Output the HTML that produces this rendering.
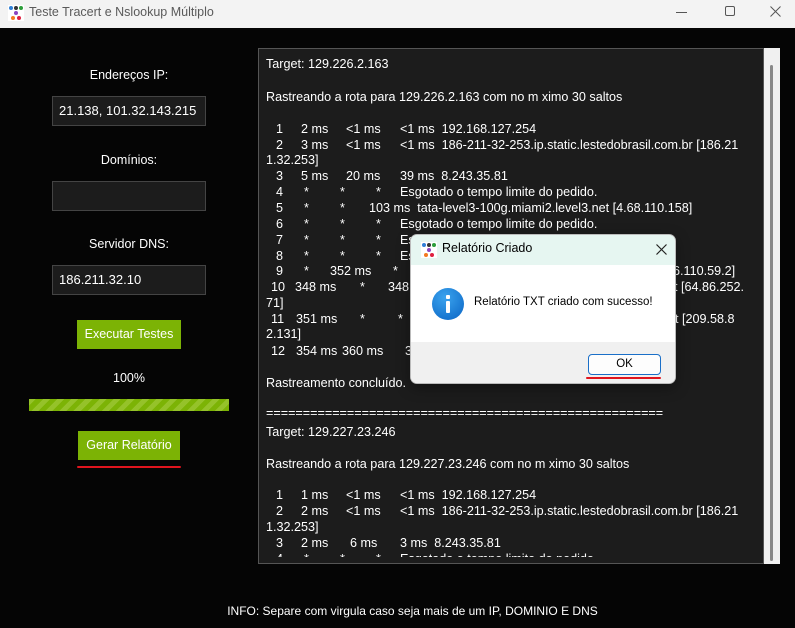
<!DOCTYPE html>
<html><head><meta charset="utf-8"><style>
*{margin:0;padding:0;box-sizing:border-box}
body{width:795px;height:628px;background:#050505;position:relative;overflow:hidden;font-family:"Segoe UI","Liberation Sans",sans-serif}
.tb{position:absolute;left:0;top:0;width:795px;height:28px;background:#f3f3f3}
.tb .t{position:absolute;left:29px;top:5px;font-size:12.5px;color:#5a5a5a}
.lbl{position:absolute;width:258px;left:0;text-align:center;color:#fff;font-size:12.5px}
.inp{position:absolute;left:52px;width:154px;height:30px;background:#1c1c1c;border:1px solid #444;color:#fff;font-size:13px;padding:6px 0 0 6px;font-family:"Liberation Sans",sans-serif;white-space:nowrap;overflow:hidden}
.btn{position:absolute;background:#7cb305;color:#fff;font-size:12.5px;text-align:center}
.box{position:absolute;left:258px;top:48px;width:506px;height:516px;background:#1c1c1c;border:1px solid #555;overflow:hidden;font-family:"Liberation Sans",Arial,sans-serif;font-size:12.6px;color:#fff}
.clip{position:absolute;left:0;top:0;width:504px;height:508px;overflow:hidden}
.l{position:absolute;white-space:pre;height:16px;line-height:16px}
.sb{position:absolute;left:764px;top:48px;width:16px;height:516px;background:#f0f0f0}
.red{position:absolute;height:2px;background:#e0141e;border-radius:2px}
</style></head><body>
<div class="tb">
<svg style="position:absolute;left:8px;top:5px" width="16" height="16"><rect width="16" height="16" fill="#fff"/><circle cx="3" cy="3" r="2" fill="#2f7fd6"/><circle cx="8" cy="3" r="2" fill="#333"/><circle cx="13" cy="3" r="2" fill="#2c9e3a"/><circle cx="8" cy="8" r="2" fill="#8b44c0"/><circle cx="5" cy="13" r="2" fill="#f47a20"/><circle cx="11" cy="13" r="2" fill="#e02040"/></svg>
<div class="t">Teste Tracert e Nslookup Múltiplo</div>
<div style="position:absolute;left:676px;top:12px;width:11px;height:1px;background:#555"></div>
<div style="position:absolute;left:725px;top:6px;width:10px;height:10px;border:1px solid #555;border-radius:2px"></div>
<svg style="position:absolute;left:770px;top:6px" width="11" height="11"><path d="M0.5 0.5L10.5 10.5M10.5 0.5L0.5 10.5" stroke="#555" stroke-width="1"/></svg>
</div>

<div class="lbl" style="top:68px">Endereços IP:</div>
<div class="inp" style="top:96px">21.138, 101.32.143.215</div>
<div class="lbl" style="top:153px">Domínios:</div>
<div class="inp" style="top:181px"></div>
<div class="lbl" style="top:237px">Servidor DNS:</div>
<div class="inp" style="top:265px">186.211.32.10</div>
<div class="btn" style="left:77px;top:320px;width:104px;height:29px;line-height:29px">Executar Testes</div>
<div class="lbl" style="top:371px">100%</div>
<div style="position:absolute;left:29px;top:399px;width:200px;height:12px;background:repeating-linear-gradient(-45deg,#7cb305 0 5px,#95c22a 5px 10px)"></div>
<div class="btn" style="left:78px;top:431px;width:102px;height:29px;line-height:29px">Gerar Relatório</div>
<div class="red" style="left:77px;top:466px;width:104px"></div>

<div class="box"><div class="clip">
<div class="l" style="left:7px;top:7px">Target: 129.226.2.163</div>
<div class="l" style="left:7px;top:40px">Rastreando a rota para 129.226.2.163 com no m ximo 30 saltos</div>
<div class="l" style="left:17px;top:72px">1</div><div class="l" style="left:42px;top:72px">2 ms</div><div class="l" style="left:87px;top:72px">&lt;1 ms</div><div class="l" style="left:141px;top:72px">&lt;1 ms  192.168.127.254</div>
<div class="l" style="left:17px;top:88px">2</div><div class="l" style="left:42px;top:88px">3 ms</div><div class="l" style="left:87px;top:88px">&lt;1 ms</div><div class="l" style="left:141px;top:88px">&lt;1 ms  186-211-32-253.ip.static.lestedobrasil.com.br [186.21</div>
<div class="l" style="left:7px;top:103px">1.32.253]</div>
<div class="l" style="left:17px;top:119px">3</div><div class="l" style="left:42px;top:119px">5 ms</div><div class="l" style="left:87px;top:119px">20 ms</div><div class="l" style="left:141px;top:119px">39 ms  8.243.35.81</div>
<div class="l" style="left:17px;top:135px">4</div><div class="l" style="left:45px;top:135px">*</div><div class="l" style="left:81px;top:135px">*</div><div class="l" style="left:117px;top:135px">*</div><div class="l" style="left:141px;top:135px">Esgotado o tempo limite do pedido.</div>
<div class="l" style="left:17px;top:151px">5</div><div class="l" style="left:45px;top:151px">*</div><div class="l" style="left:81px;top:151px">*</div><div class="l" style="left:110px;top:151px">103 ms  tata-level3-100g.miami2.level3.net [4.68.110.158]</div>
<div class="l" style="left:17px;top:167px">6</div><div class="l" style="left:45px;top:167px">*</div><div class="l" style="left:81px;top:167px">*</div><div class="l" style="left:117px;top:167px">*</div><div class="l" style="left:141px;top:167px">Esgotado o tempo limite do pedido.</div>
<div class="l" style="left:17px;top:183px">7</div><div class="l" style="left:45px;top:183px">*</div><div class="l" style="left:81px;top:183px">*</div><div class="l" style="left:117px;top:183px">*</div><div class="l" style="left:141px;top:183px">Esgotado o tempo limite do pedido.</div>
<div class="l" style="left:17px;top:199px">8</div><div class="l" style="left:45px;top:199px">*</div><div class="l" style="left:81px;top:199px">*</div><div class="l" style="left:117px;top:199px">*</div><div class="l" style="left:141px;top:199px">Esgotado o tempo limite do pedido.</div>
<div class="l" style="left:17px;top:214px">9</div><div class="l" style="left:45px;top:214px">*</div><div class="l" style="left:71px;top:214px">352 ms</div><div class="l" style="left:134px;top:214px">*</div><div class="l" style="left:414px;top:214px">6.110.59.2]</div>
<div class="l" style="left:12px;top:230px">10</div><div class="l" style="left:36px;top:230px">348 ms</div><div class="l" style="left:101px;top:230px">*</div><div class="l" style="left:129px;top:230px">348</div><div class="l" style="left:408px;top:230px">et [64.86.252.</div>
<div class="l" style="left:7px;top:246px">71]</div>
<div class="l" style="left:12px;top:262px">11</div><div class="l" style="left:37px;top:262px">351 ms</div><div class="l" style="left:101px;top:262px">*</div><div class="l" style="left:139px;top:262px">*</div><div class="l" style="left:402px;top:262px">net [209.58.8</div>
<div class="l" style="left:7px;top:277px">2.131]</div>
<div class="l" style="left:12px;top:294px">12</div><div class="l" style="left:37px;top:294px">354 ms</div><div class="l" style="left:83px;top:294px">360 ms</div><div class="l" style="left:146px;top:294px">3</div>
<div class="l" style="left:7px;top:326px">Rastreamento concluído.</div>
<div class="l" style="left:7px;top:356px">======================================================</div>
<div class="l" style="left:7px;top:375px">Target: 129.227.23.246</div>
<div class="l" style="left:7px;top:407px">Rastreando a rota para 129.227.23.246 com no m ximo 30 saltos</div>
<div class="l" style="left:17px;top:438px">1</div><div class="l" style="left:42px;top:438px">1 ms</div><div class="l" style="left:87px;top:438px">&lt;1 ms</div><div class="l" style="left:141px;top:438px">&lt;1 ms  192.168.127.254</div>
<div class="l" style="left:17px;top:454px">2</div><div class="l" style="left:42px;top:454px">2 ms</div><div class="l" style="left:87px;top:454px">&lt;1 ms</div><div class="l" style="left:141px;top:454px">&lt;1 ms  186-211-32-253.ip.static.lestedobrasil.com.br [186.21</div>
<div class="l" style="left:7px;top:470px">1.32.253]</div>
<div class="l" style="left:17px;top:486px">3</div><div class="l" style="left:42px;top:486px">2 ms</div><div class="l" style="left:91px;top:486px">6 ms</div><div class="l" style="left:141px;top:486px">3 ms  8.243.35.81</div>
<div class="l" style="left:17px;top:502px">4</div><div class="l" style="left:45px;top:502px">*</div><div class="l" style="left:81px;top:502px">*</div><div class="l" style="left:117px;top:502px">*</div><div class="l" style="left:141px;top:502px">Esgotado o tempo limite do pedido.</div>
</div></div>
<div class="sb"><div style="position:absolute;left:6px;top:17px;width:3px;height:496px;background:#888;border-radius:2px"></div></div>

<div style="position:absolute;left:410px;top:234px;width:266px;height:150px;background:#fff;border:1px solid #bbb;border-radius:7px;overflow:hidden;box-shadow:0 4px 14px rgba(0,0,0,.35)">
<div style="position:absolute;left:0;top:0;width:266px;height:30px;background:#e6f6f1"></div>
<svg style="position:absolute;left:10px;top:7px" width="16" height="16"><rect width="16" height="16" fill="#fff"/><circle cx="3" cy="3" r="2" fill="#2f7fd6"/><circle cx="8" cy="3" r="2" fill="#333"/><circle cx="13" cy="3" r="2" fill="#2c9e3a"/><circle cx="8" cy="8" r="2" fill="#8b44c0"/><circle cx="5" cy="13" r="2" fill="#f47a20"/><circle cx="11" cy="13" r="2" fill="#e02040"/></svg>
<div style="position:absolute;left:31px;top:6px;font-size:12.5px;color:#000">Relatório Criado</div>
<svg style="position:absolute;left:245px;top:9px" width="11" height="11"><path d="M0.5 0.5L10.5 10.5M10.5 0.5L0.5 10.5" stroke="#222" stroke-width="1.2"/></svg>
<div style="position:absolute;left:21px;top:53px;width:32px;height:32px;border-radius:50%;background:radial-gradient(circle at 40% 30%,#3aa3ee,#0a64c4)"></div>
<div style="position:absolute;left:35px;top:60px;width:4px;height:4px;background:#fff;border-radius:1px"></div>
<div style="position:absolute;left:35px;top:66px;width:4px;height:12px;background:#fff;border-radius:1px"></div>
<div style="position:absolute;left:63px;top:61px;font-size:11.5px;color:#000">Relatório TXT criado com sucesso!</div>
<div style="position:absolute;left:0;top:107px;width:266px;height:43px;background:#f0f0f0"></div>
<div style="position:absolute;left:177px;top:119px;width:73px;height:21px;background:#fdfdfd;border:1.5px solid #1a6fc8;border-radius:4px;font-size:11.5px;text-align:center;line-height:18px;color:#000">OK</div>
</div>
<div class="red" style="left:586px;top:377px;width:75px"></div>

<div style="position:absolute;left:0;width:825px;top:604px;text-align:center;color:#fff;font-size:12px">INFO: Separe com virgula caso seja mais de um IP, DOMINIO E DNS</div>
</body></html>
